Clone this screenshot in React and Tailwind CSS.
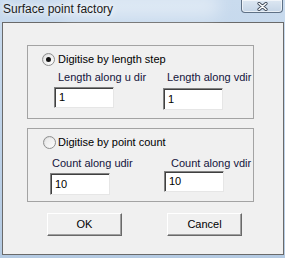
import React from "react";

const ui = { fontFamily: '"Liberation Sans", Arial, sans-serif' };

function Radio({ checked }) {
  return (
    <span className="relative flex h-[13px] w-[13px] shrink-0 items-center justify-center rounded-full border border-[#8e8f8f] bg-gradient-to-br from-[#d6d6d6] to-[#ffffff]">
      <span className="flex h-[9px] w-[9px] items-center justify-center rounded-full bg-gradient-to-br from-[#e8e8e8] to-[#fbfbfb]">
        {checked && <span className="h-[5px] w-[5px] rounded-full bg-[#111]" />}
      </span>
    </span>
  );
}

function Field({ value, className = "" }) {
  return (
    <div
      className={`flex w-[60px] items-center border border-t-[#828282] border-l-[#828282] border-b-[#e6e6e6] border-r-[#e6e6e6] bg-white shadow-[inset_1px_1px_0_#404040] pl-[4px] text-[11px] text-black ${className}`}
    >
      {value}
    </div>
  );
}

function Button({ children }) {
  return (
    <div className="flex h-[23px] w-[75px] items-center justify-center border border-t-white border-l-white border-b-[#696969] border-r-[#696969] bg-[#f0f0f0] shadow-[inset_-1px_-1px_0_#a0a0a0] text-[11px] text-black">
      {children}
    </div>
  );
}

export default function App() {
  return (
    <div
      className="flex h-[258px] w-[285px] flex-col overflow-hidden bg-gradient-to-b from-[#c9dbee] via-[#bfd3e9] to-[#b4cae2]"
      style={ui}
    >
      {/* Title bar */}
      <div className="relative h-[22px] shrink-0">
        <div className="absolute left-[60px] top-[-6px] h-[24px] w-[160px] rounded-full bg-white/40 blur-[8px]" />
        <span className="relative block pl-[3px] pt-[2px] text-[12px] leading-[15px] text-[#1b1b1b] [text-shadow:0_0_5px_#ffffff,0_0_8px_#ffffff]">
          Surface point factory
        </span>
        <div className="absolute right-[2px] top-0 flex h-[13px] w-[42px] items-center justify-center rounded-b-[4px] border border-t-0 border-[#5f7186] bg-gradient-to-b from-[#dde7f2] to-[#c5d5e7] shadow-[inset_0_0_0_1px_rgba(255,255,255,0.6)]">
          <svg width="11" height="9" viewBox="0 0 11 9">
            <path d="M2 1.5 L9 7.5 M9 1.5 L2 7.5" stroke="#3c4756" strokeWidth="3.2" strokeLinecap="round" />
            <path d="M2 1.5 L9 7.5 M9 1.5 L2 7.5" stroke="#ffffff" strokeWidth="1.6" strokeLinecap="round" />
          </svg>
        </div>
      </div>

      {/* Client area */}
      <div className="ml-[2px] mr-[1px] h-[233px] shrink-0 border border-[#6a6a6a] bg-[#f0f0f0] pl-[24px] pt-[22px]">
        {/* Group 1 */}
        <div className="h-[74px] w-[227px] border border-[#a3a3a3]">
          <div className="ml-[14px] mt-[7px] flex items-center gap-[3px] text-[11px] leading-[13px] text-black">
            <Radio checked />
            <span>Digitise by length step</span>
          </div>
          <div className="flex">
            <div className="ml-[26px] w-[109px]">
              <div className="mt-[4px] pl-[4px] text-[11px] leading-[14px] text-[#14143c]">Length along u dir</div>
              <Field value="1" className="mt-[3px] h-[21px]" />
            </div>
            <div>
              <div className="mt-[4px] pl-[4px] text-[11px] leading-[14px] text-[#14143c]">Length along vdir</div>
              <Field value="1" className="mt-[4px] h-[22px] w-[59px]" />
            </div>
          </div>
        </div>

        {/* Group 2 */}
        <div className="mt-[9px] h-[74px] w-[227px] border border-[#a3a3a3]">
          <div className="ml-[15px] mt-[7px] flex items-center gap-[2px] text-[11px] leading-[13px] text-black">
            <Radio />
            <span>Digitise by point count</span>
          </div>
          <div className="flex">
            <div className="ml-[22px] w-[114px]">
              <div className="mt-[7px] pl-[2px] text-[11px] leading-[14px] text-[#14143c]">Count along udir</div>
              <Field value="10" className="mt-[3px] h-[22px]" />
            </div>
            <div>
              <div className="mt-[7px] pl-[7px] text-[11px] leading-[14px] text-[#14143c]">Count along vdir</div>
              <Field value="10" className="mt-[1px] h-[21px]" />
            </div>
          </div>
        </div>

        {/* Buttons */}
        <div className="mt-[11px] flex gap-[45px] pl-[20px]">
          <Button>OK</Button>
          <Button>Cancel</Button>
        </div>
      </div>
    </div>
  );
}
